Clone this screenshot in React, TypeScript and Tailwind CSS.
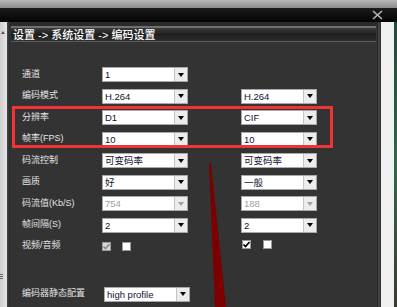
import React from 'react';

const FONT = { fontFamily: '"Liberation Sans", "Noto Sans CJK SC", sans-serif' };

interface SelectProps {
  value: string;
  width: string;
  disabled?: boolean;
}

function Select({ value, width, disabled }: SelectProps) {
  return (
    <div className={`${width} h-[15px] flex border border-[#a8a8a8] bg-white`}>
      <div className={`flex-1 pl-[2px] text-[9.5px] leading-[13px] truncate ${disabled ? 'text-[#a0a0a0]' : 'text-[#101030]'}`}>
        {value}
      </div>
      <div className="w-[13px] h-full flex items-center justify-center bg-[#ececec] border-l border-[#c4c4c4]">
        <div className={`w-0 h-0 border-l-[3px] border-r-[3px] border-t-[4px] border-l-transparent border-r-transparent ${disabled ? 'border-t-[#a0a0a0]' : 'border-t-black'}`} />
      </div>
    </div>
  );
}

function Check({ checked, disabled }: { checked?: boolean; disabled?: boolean }) {
  return (
    <div className={`w-[9px] h-[9px] border border-[#9a9a9a] flex items-center justify-center ${disabled ? 'bg-[#d8d8d8]' : 'bg-white'}`}>
      {checked && (
        <svg width="7" height="7" viewBox="0 0 7 7">
          <path d="M0.5 3.5 L2.5 5.5 L6.5 1" stroke={disabled ? '#8a8a8a' : '#000'} strokeWidth="1.6" fill="none" />
        </svg>
      )}
    </div>
  );
}

const rows: { label: string; left: string; right?: string; disabled?: boolean }[] = [
  { label: '通道', left: '1' },
  { label: '编码模式', left: 'H.264', right: 'H.264' },
  { label: '分辨率', left: 'D1', right: 'CIF' },
  { label: '帧率(FPS)', left: '10', right: '10' },
  { label: '码流控制', left: '可变码率', right: '可变码率' },
  { label: '画质', left: '好', right: '一般' },
  { label: '码流值(Kb/S)', left: '754', right: '188', disabled: true },
  { label: '帧间隔(S)', left: '2', right: '2' },
];

export default function App() {
  return (
    <div className="relative w-[397px] h-[307px] overflow-hidden bg-[#333333] flex flex-col" style={FONT}>
      {/* window chrome */}
      <div className="h-[8px] shrink-0 bg-gradient-to-b from-[#b8b8b8] to-[#8c8c8c]" />
      <div className="h-[14px] shrink-0 flex justify-end items-center pr-[14px] bg-gradient-to-b from-[#1c1c1c] to-[#050505]">
        <svg width="11" height="10" viewBox="0 0 11 10">
          <path d="M1 1 L10 9 M10 1 L1 9" stroke="#b8b8b8" strokeWidth="1.6" />
        </svg>
      </div>

      <div className="flex-1 flex">
        {/* left strip */}
        <div className="w-[7px] bg-gradient-to-r from-[#cfcfcf] to-[#e6e6e6] flex flex-col items-start">
          <div className="mt-[9px] ml-[1px] w-0 h-0 border-l-[2px] border-r-[2px] border-b-[3px] border-l-transparent border-r-transparent border-b-[#555]" />
          <div className="mt-[240px] w-[3px] flex flex-col gap-[1px]">
            <div className="h-px bg-[#666]" />
            <div className="h-px bg-[#666]" />
            <div className="h-px bg-[#666]" />
          </div>
        </div>
        <div className="w-[3px] bg-gradient-to-r from-[#4a4a4a] to-[#262626]" />

        {/* panel */}
        <div className="flex-1 flex flex-col bg-[#333333]">
          <div className="h-[4px] bg-[#2a2a2a]" />
          <div className="h-[16px] mx-[1px] flex items-center pl-[2px] border-t-2 border-[#707070] border-b border-b-[#5a5a5a] bg-gradient-to-b from-[#3a3a3a] via-[#1e1e1e] to-[#2e2e2e]">
            <span className="text-[11px] leading-[12px] text-white font-medium">设置 -&gt; 系统设置 -&gt; 编码设置</span>
          </div>

          <div className="flex flex-col pt-[25px] pl-[12px]">
            {rows.map((r) => (
              <div key={r.label} className="h-[21.5px] flex items-start">
                <div className="w-[80px] h-[15px] flex items-center text-[9px] text-[#e4e4e4]">{r.label}</div>
                <Select value={r.left} width="w-[86px]" disabled={r.disabled} />
                {r.right && (
                  <div className="ml-[53px]">
                    <Select value={r.right} width="w-[76px]" disabled={r.disabled} />
                  </div>
                )}
              </div>
            ))}
            <div className="h-[21.5px] flex items-start">
              <div className="w-[80px] h-[13px] flex items-center text-[9px] text-[#e4e4e4]">视频/音频</div>
              <div className="flex gap-[11px] mt-[3px]">
                <Check checked disabled />
                <Check />
              </div>
              <div className="flex gap-[12px] ml-[111px] mt-[1px]">
                <Check checked />
                <Check />
              </div>
            </div>
            <div className="mt-[26px] h-[15px] flex items-start">
              <div className="w-[82px] h-[15px] flex items-center text-[9px] text-[#e4e4e4]">编码器静态配置</div>
              <Select value="high profile" width="w-[86px]" />
            </div>
          </div>
        </div>

        <div className="w-[4px] bg-gradient-to-r from-[#202020] via-[#4a4a4a] to-[#2a2a2a]" />
        <div className="w-[13px] bg-[#f0f0f0]" />
        <div className="w-[3px] bg-gradient-to-b from-[#1e4a3a] via-[#2a6a4a] to-[#3a3a2a]" />
      </div>

      {/* annotations */}
      <div className="absolute left-[12px] top-[106px] w-[321px] h-[42px] border-[3px] border-[#ee3434]" />
      <svg className="absolute left-0 top-0" width="397" height="307" viewBox="0 0 397 307">
        <polygon points="209,163 211,163 226,307 215,307" fill="#7c0000" />
      </svg>
    </div>
  );
}
